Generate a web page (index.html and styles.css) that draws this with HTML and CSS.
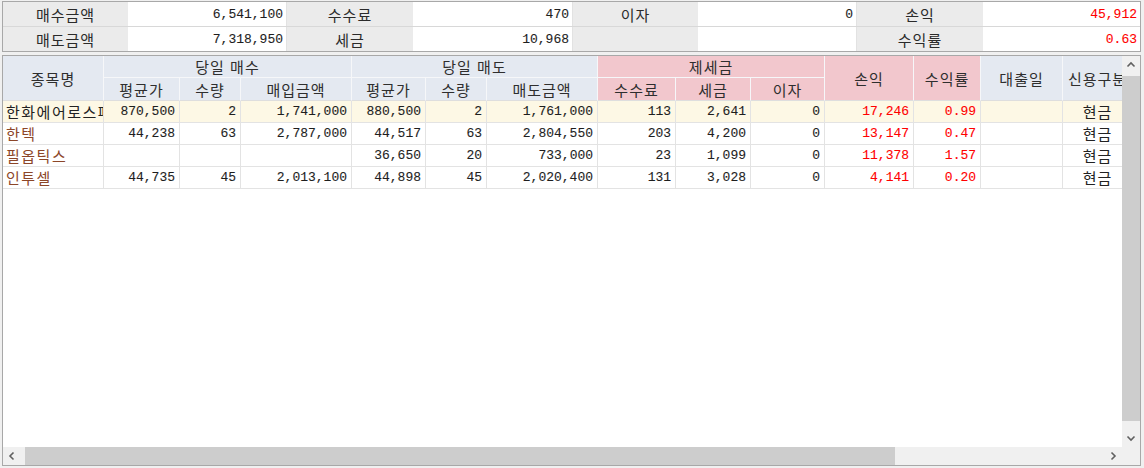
FILE: index.html
```html
<!DOCTYPE html>
<html lang="ko">
<head>
<meta charset="utf-8">
<title>당일 매매 손익</title>
<link rel="stylesheet" href="styles.css">
</head>
<body>
<div class="app">
  <div class="summary">
    <div class="lb">매수금액</div><div class="vl n">6,541,100</div>
    <div class="lb">수수료</div><div class="vl n">470</div>
    <div class="lb">이자</div><div class="vl n">0</div>
    <div class="lb">손익</div><div class="vl n red">45,912</div>
    <div class="lb">매도금액</div><div class="vl n">7,318,950</div>
    <div class="lb">세금</div><div class="vl n">10,968</div>
    <div class="lb"></div><div class="vl"></div>
    <div class="lb">수익률</div><div class="vl n red">0.63</div>
  </div>

  <div class="gridbox">
    <div class="viewport">
      <table class="tbl">
        <colgroup>
          <col class="w-name"><col class="w-avg"><col class="w-qty"><col class="w-amt">
          <col class="w-avg2"><col class="w-qty"><col class="w-amt">
          <col class="w-fee"><col class="w-tax"><col class="w-int">
          <col class="w-pl"><col class="w-rate"><col class="w-loan"><col class="w-cred">
        </colgroup>
        <thead>
          <tr class="h1">
            <th rowspan="2" class="blue">종목명</th>
            <th colspan="3" class="blue">당일 매수</th>
            <th colspan="3" class="blue">당일 매도</th>
            <th colspan="3" class="pink">제세금</th>
            <th rowspan="2" class="pink">손익</th>
            <th rowspan="2" class="pink">수익률</th>
            <th rowspan="2" class="blue">대출일</th>
            <th rowspan="2" class="blue">신용구분</th>
          </tr>
          <tr class="h2">
            <th class="blue">평균가</th><th class="blue">수량</th><th class="blue">매입금액</th>
            <th class="blue">평균가</th><th class="blue">수량</th><th class="blue">매도금액</th>
            <th class="pink">수수료</th><th class="pink">세금</th><th class="pink">이자</th>
          </tr>
        </thead>
        <tbody>
          <tr class="sel">
            <td class="name first">한화에어로스페이스</td>
            <td class="n">870,500</td><td class="n">2</td><td class="n">1,741,000</td>
            <td class="n">880,500</td><td class="n">2</td><td class="n">1,761,000</td>
            <td class="n">113</td><td class="n">2,641</td><td class="n">0</td>
            <td class="n red">17,246</td><td class="n red">0.99</td><td></td><td class="ctr">현금</td>
          </tr>
          <tr>
            <td class="name">한텍</td>
            <td class="n">44,238</td><td class="n">63</td><td class="n">2,787,000</td>
            <td class="n">44,517</td><td class="n">63</td><td class="n">2,804,550</td>
            <td class="n">203</td><td class="n">4,200</td><td class="n">0</td>
            <td class="n red">13,147</td><td class="n red">0.47</td><td></td><td class="ctr">현금</td>
          </tr>
          <tr>
            <td class="name">필옵틱스</td>
            <td class="n"></td><td class="n"></td><td class="n"></td>
            <td class="n">36,650</td><td class="n">20</td><td class="n">733,000</td>
            <td class="n">23</td><td class="n">1,099</td><td class="n">0</td>
            <td class="n red">11,378</td><td class="n red">1.57</td><td></td><td class="ctr">현금</td>
          </tr>
          <tr>
            <td class="name">인투셀</td>
            <td class="n">44,735</td><td class="n">45</td><td class="n">2,013,100</td>
            <td class="n">44,898</td><td class="n">45</td><td class="n">2,020,400</td>
            <td class="n">131</td><td class="n">3,028</td><td class="n">0</td>
            <td class="n red">4,141</td><td class="n red">0.20</td><td></td><td class="ctr">현금</td>
          </tr>
        </tbody>
      </table>
    </div>

    <div class="vscroll">
      <div class="arrow">
        <svg width="10" height="7" viewBox="0 0 10 7"><path d="M1.5 5.5 L5 2 L8.5 5.5" fill="none" stroke="#606060" stroke-width="1.6"/></svg>
      </div>
      <div class="vtrack"><div class="vthumb"></div></div>
      <div class="arrow">
        <svg width="10" height="7" viewBox="0 0 10 7"><path d="M1.5 1.5 L5 5 L8.5 1.5" fill="none" stroke="#606060" stroke-width="1.6"/></svg>
      </div>
    </div>

    <div class="hscroll">
      <div class="harrow">
        <svg width="7" height="10" viewBox="0 0 7 10"><path d="M5.5 1.5 L2 5 L5.5 8.5" fill="none" stroke="#606060" stroke-width="1.6"/></svg>
      </div>
      <div class="htrack"><div class="hthumb"></div></div>
      <div class="harrow">
        <svg width="7" height="10" viewBox="0 0 7 10"><path d="M1.5 1.5 L5 5 L1.5 8.5" fill="none" stroke="#606060" stroke-width="1.6"/></svg>
      </div>
    </div>

    <div class="corner"></div>
  </div>
</div>
</body>
</html>
```

FILE: styles.css
```css
* { box-sizing: border-box; }

html, body {
  margin: 0;
  padding: 0;
}

body {
  width: 1144px;
  height: 468px;
  background: #f0f0f0;
  font-family: "Noto Sans CJK KR", "Noto Sans", sans-serif;
  font-size: 15px;
  color: #222;
  overflow: hidden;
}

.app {
  padding: 1px 3px 0 2px;
  display: flex;
  flex-direction: column;
  gap: 3px;
}

/* ---------- summary ---------- */
.summary {
  border: 1px solid #a8a8a8;
  display: grid;
  grid-template-columns: 125px 159px 126px 160px 125px 159px 126px 1fr;
  grid-auto-rows: 24px;
  row-gap: 1px;
  background: #d8d8d8;
}

.lb {
  background: #ebebeb;
  display: flex;
  align-items: center;
  justify-content: center;
  line-height: 1;
  color: #2a2a2a;
  letter-spacing: 1px;
}

.vl {
  background: #fff;
  display: flex;
  align-items: center;
  justify-content: flex-end;
  padding-right: 3px;
  border-right: 1px solid #e2e2e2;
}
.vl:nth-child(8), .vl:nth-child(16) { border-right: 0; }

.n {
  font-family: "Liberation Mono", "DejaVu Sans Mono", monospace;
  font-size: 13px;
  letter-spacing: 0;
  -webkit-text-stroke: 0.1px currentColor;
  color: #1e1e1e;
}

.red { color: #ff0000; }

/* ---------- grid ---------- */
.gridbox {
  border: 1px solid #a8a8a8;
  height: 411px;
  background: #fff;
  display: grid;
  grid-template-columns: 1fr 18px;
  grid-template-rows: 1fr 18px;
}

.viewport {
  overflow: hidden;
  background: #fff;
}

.tbl {
  width: 1130px;
  table-layout: fixed;
  border-collapse: separate;
  border-spacing: 0;
}

.w-name { width: 101px; }
.w-avg  { width: 76px; }
.w-qty  { width: 61px; }
.w-amt  { width: 111px; }
.w-avg2 { width: 74px; }
.w-fee  { width: 78px; }
.w-tax  { width: 75px; }
.w-int  { width: 74px; }
.w-pl   { width: 89px; }
.w-rate { width: 67px; }
.w-loan { width: 82px; }
.w-cred { width: 70px; }

.tbl th {
  font-weight: normal;
  color: #2e2e2e;
  padding: 0;
  border-right: 1px solid #f6f7f9;
  border-bottom: 1px solid #f6f7f9;
  text-align: center;
  white-space: nowrap;
  overflow: hidden;
  line-height: 1;
  letter-spacing: 1px;
}
.tbl tr.h1 th { height: 22px; }
.tbl tr.h2 th { height: 23px; border-bottom-color: #dedede; }
.tbl tr.h1 th[rowspan] { border-bottom-color: #dedede; }

.blue { background: #e4e9f1; }
.pink { background: #f2c7cd; }

.tbl td {
  height: 22px;
  padding: 0 4px 0 0;
  border-right: 1px solid #e3e3e3;
  border-bottom: 1px solid #e3e3e3;
  text-align: right;
  white-space: nowrap;
  overflow: hidden;
  line-height: 1;
  vertical-align: middle;
}

.tbl td.red { color: #ff0000; }

.tbl td.name {
  text-align: left;
  padding: 0 0 0 3px;
  color: #8c4628;
  letter-spacing: 1.5px;
  text-overflow: clip;
}
.tbl td.name.first { color: #222; }

.tbl td.ctr {
  text-align: center;
  padding: 0;
  letter-spacing: 1px;
}

.tbl tr.sel td { background: #fdf8e5; }

/* ---------- scrollbars ---------- */
.vscroll {
  background: #f0f0f0;
  display: flex;
  flex-direction: column;
}
.arrow {
  height: 17px;
  display: flex;
  align-items: center;
  justify-content: center;
}
.vtrack {
  flex: 1;
  padding-top: 3px;
}
.vthumb {
  height: 345px;
  background: #cdcdcd;
}

.hscroll {
  background: #f0f0f0;
  display: flex;
}
.harrow {
  width: 17px;
  display: flex;
  align-items: center;
  justify-content: center;
}
.htrack {
  flex: 1;
  padding-left: 5px;
}
.hthumb {
  width: 870px;
  height: 100%;
  background: #cdcdcd;
}

.corner { background: #f0f0f0; }
```
